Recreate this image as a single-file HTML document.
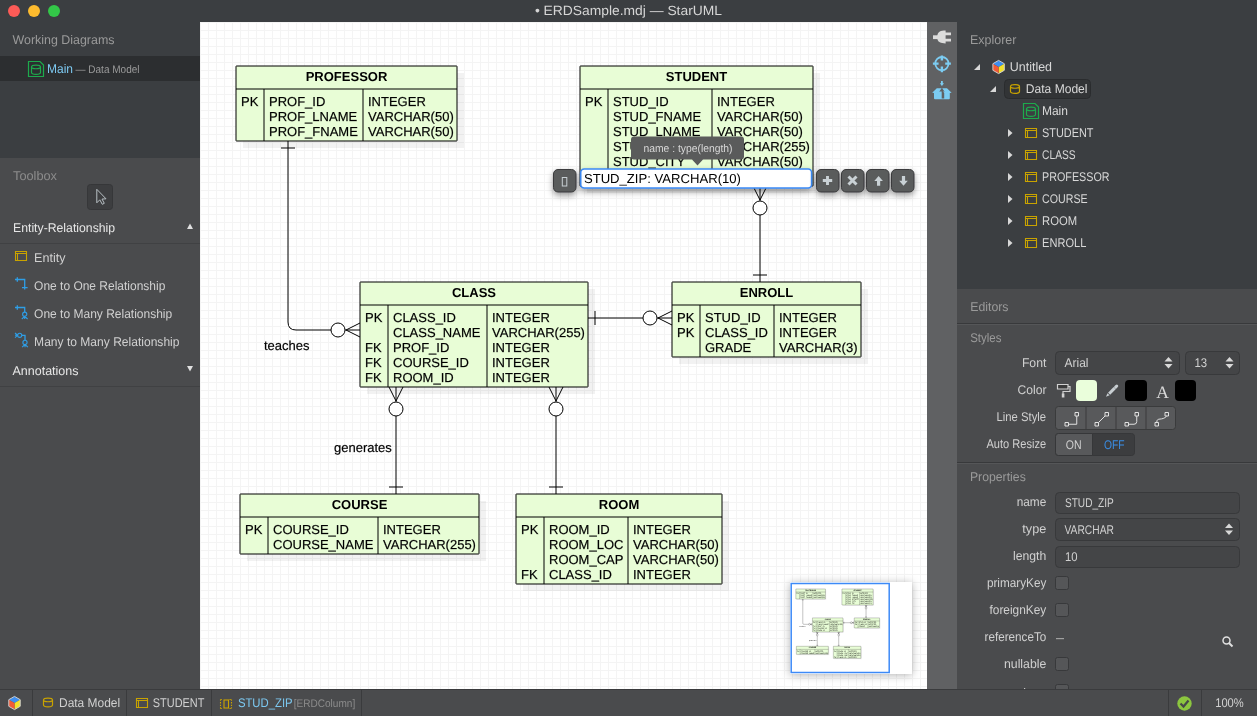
<!DOCTYPE html>
<html><head><meta charset="utf-8"><title>StarUML</title>
<style>
html,body{margin:0;padding:0;width:1257px;height:716px;overflow:hidden;background:#3b3e41;}
svg{display:block;font-family:"Liberation Sans", sans-serif;text-rendering:geometricPrecision;will-change:transform;}
</style></head><body>
<svg width="1257" height="716" viewBox="0 0 1257 716">
<defs>
<pattern id="grid" x="200" y="22" width="8" height="8" patternUnits="userSpaceOnUse">
<rect width="8" height="8" fill="#fff"/><rect width="8" height="1" fill="#f4f4f4"/><rect width="1" height="8" fill="#f4f4f4"/>
</pattern>
<clipPath id="canvasclip"><rect x="200" y="22" width="727" height="667"/></clipPath>
<clipPath id="miniclip"><rect x="790" y="582" width="122" height="92"/></clipPath>
<filter id="shadow" x="-50%" y="-50%" width="200%" height="200%"><feDropShadow dx="0" dy="3" stdDeviation="3" flood-color="#000" flood-opacity="0.4"/></filter>
<filter id="shadow2" x="-30%" y="-30%" width="160%" height="160%"><feDropShadow dx="0" dy="1" stdDeviation="4" flood-color="#000" flood-opacity="0.3"/></filter>
<g id="diagram">
<path d="M288 141 V322 Q288 330 296 330 H331" stroke="#000" stroke-width="1" fill="none"/>
<path d="M281 148 H295" stroke="#000" stroke-width="1" fill="none"/>
<circle cx="338" cy="330" r="7" fill="#fff" stroke="#000" stroke-width="1"/>
<path d="M345 330 H360 M346 330 L360 323 M346 330 L360 337" stroke="#000" stroke-width="1" fill="none"/>
<path d="M760 186 V201 M760 215 V282" stroke="#000" stroke-width="1" fill="none"/>
<path d="M760 200 L753 186 M760 200 L767 186" stroke="#000" stroke-width="1" fill="none"/>
<circle cx="760" cy="208" r="7" fill="#fff" stroke="#000" stroke-width="1"/>
<path d="M753 275 H767" stroke="#000" stroke-width="1" fill="none"/>
<path d="M588 318 H643 M657 318 H672" stroke="#000" stroke-width="1" fill="none"/>
<path d="M595 311 V325" stroke="#000" stroke-width="1" fill="none"/>
<circle cx="650" cy="318" r="7" fill="#fff" stroke="#000" stroke-width="1"/>
<path d="M658 318 L672 311 M658 318 L672 325" stroke="#000" stroke-width="1" fill="none"/>
<path d="M396 387 V402 M396 416 V494" stroke="#000" stroke-width="1" fill="none"/>
<path d="M396 401 L389 387 M396 401 L403 387" stroke="#000" stroke-width="1" fill="none"/>
<circle cx="396" cy="409" r="7" fill="#fff" stroke="#000" stroke-width="1"/>
<path d="M389 487 H403" stroke="#000" stroke-width="1" fill="none"/>
<path d="M556 387 V402 M556 416 V494" stroke="#000" stroke-width="1" fill="none"/>
<path d="M556 401 L549 387 M556 401 L563 387" stroke="#000" stroke-width="1" fill="none"/>
<circle cx="556" cy="409" r="7" fill="#fff" stroke="#000" stroke-width="1"/>
<path d="M549 487 H563" stroke="#000" stroke-width="1" fill="none"/>
<text x="264" y="350" font-size="13" fill="#000" stroke="#000" stroke-width="0.3" stroke-opacity="0.6">teaches</text>
<text x="334" y="452" font-size="13" fill="#000" stroke="#000" stroke-width="0.3" stroke-opacity="0.6">generates</text>
<rect x="243" y="73" width="221" height="75" fill="#000" fill-opacity="0.05"/>
<rect x="236" y="66" width="221" height="75" fill="#e8fdd6" stroke="#000" stroke-width="1" rx="0.4"/>
<path d="M236 89 H457 M264 89 V141 M363 89 V141" stroke="#000" stroke-width="1" fill="none"/>
<text x="346.5" y="81" font-size="13" font-weight="bold" text-anchor="middle" fill="#000">PROFESSOR</text>
<text x="241" y="106" font-size="13" fill="#000" stroke="#000" stroke-width="0.3" stroke-opacity="0.6">PK</text>
<text x="269" y="106" font-size="13" fill="#000" stroke="#000" stroke-width="0.3" stroke-opacity="0.6">PROF_ID</text>
<text x="368" y="106" font-size="13" fill="#000" stroke="#000" stroke-width="0.3" stroke-opacity="0.6">INTEGER</text>
<text x="269" y="121" font-size="13" fill="#000" stroke="#000" stroke-width="0.3" stroke-opacity="0.6">PROF_LNAME</text>
<text x="368" y="121" font-size="13" fill="#000" stroke="#000" stroke-width="0.3" stroke-opacity="0.6">VARCHAR(50)</text>
<text x="269" y="136" font-size="13" fill="#000" stroke="#000" stroke-width="0.3" stroke-opacity="0.6">PROF_FNAME</text>
<text x="368" y="136" font-size="13" fill="#000" stroke="#000" stroke-width="0.3" stroke-opacity="0.6">VARCHAR(50)</text>
<rect x="587" y="73" width="233" height="120" fill="#000" fill-opacity="0.05"/>
<rect x="580" y="66" width="233" height="120" fill="#e8fdd6" stroke="#000" stroke-width="1" rx="0.4"/>
<path d="M580 89 H813 M608 89 V186 M712 89 V186" stroke="#000" stroke-width="1" fill="none"/>
<text x="696.5" y="81" font-size="13" font-weight="bold" text-anchor="middle" fill="#000">STUDENT</text>
<text x="585" y="106" font-size="13" fill="#000" stroke="#000" stroke-width="0.3" stroke-opacity="0.6">PK</text>
<text x="613" y="106" font-size="13" fill="#000" stroke="#000" stroke-width="0.3" stroke-opacity="0.6">STUD_ID</text>
<text x="717" y="106" font-size="13" fill="#000" stroke="#000" stroke-width="0.3" stroke-opacity="0.6">INTEGER</text>
<text x="613" y="121" font-size="13" fill="#000" stroke="#000" stroke-width="0.3" stroke-opacity="0.6">STUD_FNAME</text>
<text x="717" y="121" font-size="13" fill="#000" stroke="#000" stroke-width="0.3" stroke-opacity="0.6">VARCHAR(50)</text>
<text x="613" y="136" font-size="13" fill="#000" stroke="#000" stroke-width="0.3" stroke-opacity="0.6">STUD_LNAME</text>
<text x="717" y="136" font-size="13" fill="#000" stroke="#000" stroke-width="0.3" stroke-opacity="0.6">VARCHAR(50)</text>
<text x="613" y="151" font-size="13" fill="#000" stroke="#000" stroke-width="0.3" stroke-opacity="0.6">STUD_STREET</text>
<text x="717" y="151" font-size="13" fill="#000" stroke="#000" stroke-width="0.3" stroke-opacity="0.6">VARCHAR(255)</text>
<text x="613" y="166" font-size="13" fill="#000" stroke="#000" stroke-width="0.3" stroke-opacity="0.6">STUD_CITY</text>
<text x="717" y="166" font-size="13" fill="#000" stroke="#000" stroke-width="0.3" stroke-opacity="0.6">VARCHAR(50)</text>
<text x="613" y="181" font-size="13" fill="#000" stroke="#000" stroke-width="0.3" stroke-opacity="0.6">STUD_ZIP</text>
<text x="717" y="181" font-size="13" fill="#000" stroke="#000" stroke-width="0.3" stroke-opacity="0.6">VARCHAR(10)</text>
<rect x="367" y="289" width="228" height="105" fill="#000" fill-opacity="0.05"/>
<rect x="360" y="282" width="228" height="105" fill="#e8fdd6" stroke="#000" stroke-width="1" rx="0.4"/>
<path d="M360 305 H588 M388 305 V387 M487 305 V387" stroke="#000" stroke-width="1" fill="none"/>
<text x="474.0" y="297" font-size="13" font-weight="bold" text-anchor="middle" fill="#000">CLASS</text>
<text x="365" y="322" font-size="13" fill="#000" stroke="#000" stroke-width="0.3" stroke-opacity="0.6">PK</text>
<text x="393" y="322" font-size="13" fill="#000" stroke="#000" stroke-width="0.3" stroke-opacity="0.6">CLASS_ID</text>
<text x="492" y="322" font-size="13" fill="#000" stroke="#000" stroke-width="0.3" stroke-opacity="0.6">INTEGER</text>
<text x="393" y="337" font-size="13" fill="#000" stroke="#000" stroke-width="0.3" stroke-opacity="0.6">CLASS_NAME</text>
<text x="492" y="337" font-size="13" fill="#000" stroke="#000" stroke-width="0.3" stroke-opacity="0.6">VARCHAR(255)</text>
<text x="365" y="352" font-size="13" fill="#000" stroke="#000" stroke-width="0.3" stroke-opacity="0.6">FK</text>
<text x="393" y="352" font-size="13" fill="#000" stroke="#000" stroke-width="0.3" stroke-opacity="0.6">PROF_ID</text>
<text x="492" y="352" font-size="13" fill="#000" stroke="#000" stroke-width="0.3" stroke-opacity="0.6">INTEGER</text>
<text x="365" y="367" font-size="13" fill="#000" stroke="#000" stroke-width="0.3" stroke-opacity="0.6">FK</text>
<text x="393" y="367" font-size="13" fill="#000" stroke="#000" stroke-width="0.3" stroke-opacity="0.6">COURSE_ID</text>
<text x="492" y="367" font-size="13" fill="#000" stroke="#000" stroke-width="0.3" stroke-opacity="0.6">INTEGER</text>
<text x="365" y="382" font-size="13" fill="#000" stroke="#000" stroke-width="0.3" stroke-opacity="0.6">FK</text>
<text x="393" y="382" font-size="13" fill="#000" stroke="#000" stroke-width="0.3" stroke-opacity="0.6">ROOM_ID</text>
<text x="492" y="382" font-size="13" fill="#000" stroke="#000" stroke-width="0.3" stroke-opacity="0.6">INTEGER</text>
<rect x="679" y="289" width="189" height="75" fill="#000" fill-opacity="0.05"/>
<rect x="672" y="282" width="189" height="75" fill="#e8fdd6" stroke="#000" stroke-width="1" rx="0.4"/>
<path d="M672 305 H861 M700 305 V357 M774 305 V357" stroke="#000" stroke-width="1" fill="none"/>
<text x="766.5" y="297" font-size="13" font-weight="bold" text-anchor="middle" fill="#000">ENROLL</text>
<text x="677" y="322" font-size="13" fill="#000" stroke="#000" stroke-width="0.3" stroke-opacity="0.6">PK</text>
<text x="705" y="322" font-size="13" fill="#000" stroke="#000" stroke-width="0.3" stroke-opacity="0.6">STUD_ID</text>
<text x="779" y="322" font-size="13" fill="#000" stroke="#000" stroke-width="0.3" stroke-opacity="0.6">INTEGER</text>
<text x="677" y="337" font-size="13" fill="#000" stroke="#000" stroke-width="0.3" stroke-opacity="0.6">PK</text>
<text x="705" y="337" font-size="13" fill="#000" stroke="#000" stroke-width="0.3" stroke-opacity="0.6">CLASS_ID</text>
<text x="779" y="337" font-size="13" fill="#000" stroke="#000" stroke-width="0.3" stroke-opacity="0.6">INTEGER</text>
<text x="705" y="352" font-size="13" fill="#000" stroke="#000" stroke-width="0.3" stroke-opacity="0.6">GRADE</text>
<text x="779" y="352" font-size="13" fill="#000" stroke="#000" stroke-width="0.3" stroke-opacity="0.6">VARCHAR(3)</text>
<rect x="247" y="501" width="239" height="60" fill="#000" fill-opacity="0.05"/>
<rect x="240" y="494" width="239" height="60" fill="#e8fdd6" stroke="#000" stroke-width="1" rx="0.4"/>
<path d="M240 517 H479 M268 517 V554 M378 517 V554" stroke="#000" stroke-width="1" fill="none"/>
<text x="359.5" y="509" font-size="13" font-weight="bold" text-anchor="middle" fill="#000">COURSE</text>
<text x="245" y="534" font-size="13" fill="#000" stroke="#000" stroke-width="0.3" stroke-opacity="0.6">PK</text>
<text x="273" y="534" font-size="13" fill="#000" stroke="#000" stroke-width="0.3" stroke-opacity="0.6">COURSE_ID</text>
<text x="383" y="534" font-size="13" fill="#000" stroke="#000" stroke-width="0.3" stroke-opacity="0.6">INTEGER</text>
<text x="273" y="549" font-size="13" fill="#000" stroke="#000" stroke-width="0.3" stroke-opacity="0.6">COURSE_NAME</text>
<text x="383" y="549" font-size="13" fill="#000" stroke="#000" stroke-width="0.3" stroke-opacity="0.6">VARCHAR(255)</text>
<rect x="523" y="501" width="206" height="90" fill="#000" fill-opacity="0.05"/>
<rect x="516" y="494" width="206" height="90" fill="#e8fdd6" stroke="#000" stroke-width="1" rx="0.4"/>
<path d="M516 517 H722 M544 517 V584 M628 517 V584" stroke="#000" stroke-width="1" fill="none"/>
<text x="619.0" y="509" font-size="13" font-weight="bold" text-anchor="middle" fill="#000">ROOM</text>
<text x="521" y="534" font-size="13" fill="#000" stroke="#000" stroke-width="0.3" stroke-opacity="0.6">PK</text>
<text x="549" y="534" font-size="13" fill="#000" stroke="#000" stroke-width="0.3" stroke-opacity="0.6">ROOM_ID</text>
<text x="633" y="534" font-size="13" fill="#000" stroke="#000" stroke-width="0.3" stroke-opacity="0.6">INTEGER</text>
<text x="549" y="549" font-size="13" fill="#000" stroke="#000" stroke-width="0.3" stroke-opacity="0.6">ROOM_LOC</text>
<text x="633" y="549" font-size="13" fill="#000" stroke="#000" stroke-width="0.3" stroke-opacity="0.6">VARCHAR(50)</text>
<text x="549" y="564" font-size="13" fill="#000" stroke="#000" stroke-width="0.3" stroke-opacity="0.6">ROOM_CAP</text>
<text x="633" y="564" font-size="13" fill="#000" stroke="#000" stroke-width="0.3" stroke-opacity="0.6">VARCHAR(50)</text>
<text x="521" y="579" font-size="13" fill="#000" stroke="#000" stroke-width="0.3" stroke-opacity="0.6">FK</text>
<text x="549" y="579" font-size="13" fill="#000" stroke="#000" stroke-width="0.3" stroke-opacity="0.6">CLASS_ID</text>
<text x="633" y="579" font-size="13" fill="#000" stroke="#000" stroke-width="0.3" stroke-opacity="0.6">INTEGER</text>
</g>
</defs>

<rect x="0" y="0" width="1257" height="22" fill="#3b3e41"/>
<rect x="0" y="22" width="200" height="136" fill="#3b3e41"/>
<rect x="0" y="56" width="200" height="25" fill="#2c2e30"/>
<rect x="0" y="158" width="200" height="531" fill="#4a4b4d"/>
<rect x="957" y="22" width="300" height="267" fill="#3b3e41"/>
<rect x="957" y="289" width="300" height="400" fill="#4a4b4d"/>
<rect x="927" y="22" width="30" height="667" fill="#606163"/>
<rect x="0" y="689" width="1257" height="27" fill="#4a4b4d"/>
<g clip-path="url(#canvasclip)">
<rect x="200" y="22" width="727" height="667" fill="url(#grid)"/>
<use href="#diagram"/>
</g>
<circle cx="14" cy="11" r="6" fill="#fc5b57"/>
<circle cx="34" cy="11" r="6" fill="#fdbb2e"/>
<circle cx="54" cy="11" r="6" fill="#33c748"/>
<text x="534.90" y="15" font-size="13.3" fill="#d6d6d6" textLength="187.10" lengthAdjust="spacingAndGlyphs">• ERDSample.mdj — StarUML</text>
<text x="12.50" y="44" font-size="12.6" fill="#9a9a9a" textLength="102.00" lengthAdjust="spacingAndGlyphs">Working Diagrams</text>
<text x="47.00" y="73" font-size="12.6" fill="#7cc8f0" textLength="26.00" lengthAdjust="spacingAndGlyphs">Main</text>
<text x="75.50" y="73" font-size="11" fill="#9a9a9a" textLength="64.00" lengthAdjust="spacingAndGlyphs">— Data Model</text>
<text x="13.00" y="180" font-size="12.6" fill="#8c8c8c" textLength="44.00" lengthAdjust="spacingAndGlyphs">Toolbox</text>
<text x="13.00" y="232" font-size="12.6" fill="#e6e6e6" textLength="102.10" lengthAdjust="spacingAndGlyphs">Entity-Relationship</text>
<text x="34.10" y="262" font-size="12.6" fill="#d0d0d0" textLength="31.40" lengthAdjust="spacingAndGlyphs">Entity</text>
<text x="34.10" y="290" font-size="12.6" fill="#d0d0d0" textLength="131.20" lengthAdjust="spacingAndGlyphs">One to One Relationship</text>
<text x="34.10" y="318" font-size="12.6" fill="#d0d0d0" textLength="138.10" lengthAdjust="spacingAndGlyphs">One to Many Relationship</text>
<text x="34.10" y="346" font-size="12.6" fill="#d0d0d0" textLength="145.40" lengthAdjust="spacingAndGlyphs">Many to Many Relationship</text>
<text x="12.50" y="375" font-size="12.6" fill="#e6e6e6" textLength="66.00" lengthAdjust="spacingAndGlyphs">Annotations</text>
<text x="970.00" y="44" font-size="12.6" fill="#9a9a9a" textLength="46.40" lengthAdjust="spacingAndGlyphs">Explorer</text>
<text x="1009.80" y="71" font-size="12.6" fill="#d8d8d8" textLength="42.20" lengthAdjust="spacingAndGlyphs">Untitled</text>
<text x="1025.80" y="93" font-size="12.6" fill="#d8d8d8" textLength="61.70" lengthAdjust="spacingAndGlyphs">Data Model</text>
<text x="1041.90" y="115" font-size="12.6" fill="#d8d8d8" textLength="26.10" lengthAdjust="spacingAndGlyphs">Main</text>
<text x="1042.10" y="137" font-size="12.6" fill="#d8d8d8" textLength="51.40" lengthAdjust="spacingAndGlyphs">STUDENT</text>
<text x="1042.10" y="159" font-size="12.6" fill="#d8d8d8" textLength="33.60" lengthAdjust="spacingAndGlyphs">CLASS</text>
<text x="1042.10" y="181" font-size="12.6" fill="#d8d8d8" textLength="67.40" lengthAdjust="spacingAndGlyphs">PROFESSOR</text>
<text x="1042.10" y="203" font-size="12.6" fill="#d8d8d8" textLength="45.60" lengthAdjust="spacingAndGlyphs">COURSE</text>
<text x="1042.10" y="225" font-size="12.6" fill="#d8d8d8" textLength="35.10" lengthAdjust="spacingAndGlyphs">ROOM</text>
<text x="1042.10" y="247" font-size="12.6" fill="#d8d8d8" textLength="44.20" lengthAdjust="spacingAndGlyphs">ENROLL</text>
<text x="970.20" y="311" font-size="12.6" fill="#9a9a9a" textLength="38.30" lengthAdjust="spacingAndGlyphs">Editors</text>
<text x="970.20" y="342" font-size="12.6" fill="#9a9a9a" textLength="31.30" lengthAdjust="spacingAndGlyphs">Styles</text>
<text x="1021.90" y="367" font-size="12.6" fill="#d0d0d0" textLength="24.50" lengthAdjust="spacingAndGlyphs">Font</text>
<text x="1017.50" y="394" font-size="12.6" fill="#d0d0d0" textLength="29.00" lengthAdjust="spacingAndGlyphs">Color</text>
<text x="996.50" y="421" font-size="12.6" fill="#d0d0d0" textLength="49.60" lengthAdjust="spacingAndGlyphs">Line Style</text>
<text x="986.50" y="448" font-size="12.6" fill="#d0d0d0" textLength="59.60" lengthAdjust="spacingAndGlyphs">Auto Resize</text>
<text x="969.90" y="481" font-size="12.6" fill="#9a9a9a" textLength="55.90" lengthAdjust="spacingAndGlyphs">Properties</text>
<text x="1016.70" y="506" font-size="12.6" fill="#d0d0d0" textLength="29.60" lengthAdjust="spacingAndGlyphs">name</text>
<text x="1022.30" y="533" font-size="12.6" fill="#d0d0d0" textLength="24.00" lengthAdjust="spacingAndGlyphs">type</text>
<text x="1013.00" y="560" font-size="12.6" fill="#d0d0d0" textLength="33.30" lengthAdjust="spacingAndGlyphs">length</text>
<text x="986.90" y="587" font-size="12.6" fill="#d0d0d0" textLength="59.40" lengthAdjust="spacingAndGlyphs">primaryKey</text>
<text x="989.50" y="614" font-size="12.6" fill="#d0d0d0" textLength="56.80" lengthAdjust="spacingAndGlyphs">foreignKey</text>
<text x="984.60" y="641" font-size="12.6" fill="#d0d0d0" textLength="61.70" lengthAdjust="spacingAndGlyphs">referenceTo</text>
<text x="1004.00" y="668" font-size="12.6" fill="#d0d0d0" textLength="42.30" lengthAdjust="spacingAndGlyphs">nullable</text>
<text x="1009.50" y="696.5" font-size="12.6" fill="#d0d0d0" textLength="36.80" lengthAdjust="spacingAndGlyphs">unique</text>
<path d="M28.5 61.5 H40 L43.5 65 V76.5 H28.5 Z" stroke="#1daa4c" fill="none" stroke-width="1.2"/>
<path d="M31.5 67 C31.5 64.5 40.5 64.5 40.5 67 V72.5 C40.5 75 31.5 75 31.5 72.5 Z M31.5 67 C31.5 69.3 40.5 69.3 40.5 67" stroke="#1daa4c" fill="none" stroke-width="1.2"/>
<rect x="87.5" y="184.5" width="25" height="25" rx="3" fill="#3d3e40" stroke="#363739"/>
<path d="M96.8 189.3 L96.8 202.8 L99.8 199.8 L102.3 204.3 L104.3 203.3 L102 199.1 L106 198.8 Z" stroke="#b8c0c4" fill="#3d3e40" stroke-width="1"/>
<path d="M187 229 L190 223.5 L193 229 Z" stroke="none" fill="#e0e0e0" stroke-width="1"/>
<rect x="0" y="243" width="200" height="1" fill="#404143"/>
<path d="M15.5 251.5 H26.5 V260.5 H15.5 Z M15.5 253.5 H26.5 M17.5 253.5 V260.5" stroke="#c9a300" fill="none" stroke-width="1.1"/>
<path d="M15 279.5 H24.7 V289.5 M17.3 277.2 V281.8 M22 287.6 H27.6" stroke="#2f9ee6" fill="none" stroke-width="1.3"/>
<path d="M15 307.5 H24.7 V312.1 M17.3 305.2 V309.8" stroke="#2f9ee6" fill="none" stroke-width="1.3"/>
<path d="M24.7 314.2 m-2.1 0 a2.1 2.1 0 1 0 4.2 0 a2.1 2.1 0 1 0 -4.2 0 M24.7 316.3 L21.8 319 M24.7 316.3 V319 M24.7 316.3 L27.6 319" stroke="#2f9ee6" fill="none" stroke-width="1.1"/>
<path d="M15 333 L17.6 335.3 L15 337.6 M15 335.3 H17.6" stroke="#2f9ee6" fill="none" stroke-width="1.1"/>
<path d="M19.7 335.3 m-2.1 0 a2.1 2.1 0 1 0 4.2 0 a2.1 2.1 0 1 0 -4.2 0" stroke="#2f9ee6" fill="none" stroke-width="1.1"/>
<path d="M21.8 335.3 H25 V340.3" stroke="#2f9ee6" fill="none" stroke-width="1.3"/>
<path d="M25 342.4 m-2.1 0 a2.1 2.1 0 1 0 4.2 0 a2.1 2.1 0 1 0 -4.2 0 M25 344.5 L22.1 347.2 M25 344.5 V347.2 M25 344.5 L27.9 347.2" stroke="#2f9ee6" fill="none" stroke-width="1.1"/>
<path d="M187 366 L193 366 L190 371.5 Z" stroke="none" fill="#e0e0e0" stroke-width="1"/>
<rect x="0" y="386" width="200" height="1" fill="#404143"/>
<path d="M933 35.3 H938 V39.1 H933 Z" stroke="none" fill="#dcdcdc" stroke-width="1"/>
<path d="M937.4 35.3 C938 31.5 940.5 30.4 945.6 30.4 V43.4 C940.5 43.4 938 42.3 937.4 39.1 Z" stroke="none" fill="#dcdcdc" stroke-width="1"/>
<path d="M945 32.5 H951 V35.3 H945 Z M945 38.7 H951 V41.4 H945 Z" stroke="none" fill="#dcdcdc" stroke-width="1"/>
<circle cx="941.9" cy="63.6" r="6.6" fill="none" stroke="#7cccf2" stroke-width="1.8"/>
<path d="M941.9 55.4 V60.6 M941.9 66.6 V72.2 M932.9 63.6 H938.6 M945.2 63.6 H950.9" stroke="#7cccf2" fill="none" stroke-width="2.4"/>
<path d="M941.9 81 V84" stroke="#7cccf2" fill="none" stroke-width="1.8"/>
<path d="M939.8 83.2 H944 L941.9 86 Z" stroke="none" fill="#7cccf2" stroke-width="1"/>
<path d="M934 91.5 H949.8 V98.2 Q949.8 99.2 948.8 99.2 H935 Q934 99.2 934 98.2 Z" stroke="none" fill="#7cccf2" stroke-width="1"/>
<path d="M932.2 92.8 L936.8 88.2 H941.6 L938 93.6 Z M951.6 92.8 L947 88.2 H942.2 L945.8 93.6 Z" stroke="none" fill="#7cccf2" stroke-width="1"/>
<path d="M941.7 89.5 L944.2 93 V98.6 H941.7 Z" stroke="none" fill="#606163" stroke-width="1"/>
<path d="M974 70 L980 70 L980 64 Z" stroke="none" fill="#d8d8d8" stroke-width="1"/>
<path d="M998.60 60.40 L1004.32 63.70 L998.6 67 L992.88 63.70 Z" stroke="none" fill="#3d8ef0" stroke-width="1"/>
<path d="M1004.32 63.70 L1004.32 70.30 L998.60 73.60 L998.6 67 Z" stroke="none" fill="#f2e12c" stroke-width="1"/>
<path d="M992.88 63.70 L998.6 67 L998.60 73.60 L992.88 70.30 Z" stroke="none" fill="#f25a36" stroke-width="1"/>
<path d="M998.60 60.40 L1004.32 63.70 L1004.32 70.30 L998.60 73.60 L992.88 70.30 L992.88 63.70 Z" stroke="#d8d8d8" fill="none" stroke-width="0.9"/>
<rect x="1004.5" y="79.5" width="86" height="19" rx="4" fill="#323436" stroke="#2a2c2e"/>
<path d="M990 92 L996 92 L996 86 Z" stroke="none" fill="#d8d8d8" stroke-width="1"/>
<path d="M1010.5 86.5 C1010.5 84 1019.5 84 1019.5 86.5 V91.5 C1019.5 94 1010.5 94 1010.5 91.5 Z M1010.5 86.5 C1010.5 88.8 1019.5 88.8 1019.5 86.5" stroke="#c9a300" fill="none" stroke-width="1.2"/>
<text x="1025.80" y="93" font-size="12.6" fill="#d8d8d8" textLength="61.70" lengthAdjust="spacingAndGlyphs">Data Model</text>
<path d="M1023.5 103.5 H1035 L1038.5 107 V118.5 H1023.5 Z" stroke="#1daa4c" fill="none" stroke-width="1.2"/>
<path d="M1026.5 109 C1026.5 106.5 1035.5 106.5 1035.5 109 V114.5 C1035.5 117 1026.5 117 1026.5 114.5 Z M1026.5 109 C1026.5 111.3 1035.5 111.3 1035.5 109" stroke="#1daa4c" fill="none" stroke-width="1.2"/>
<path d="M1008 129 L1012.5 133 L1008 137 Z" stroke="none" fill="#d8d8d8" stroke-width="1"/>
<path d="M1025.5 128.5 H1036.5 V137.5 H1025.5 Z M1025.5 130.5 H1036.5 M1027.5 130.5 V137.5" stroke="#c9a300" fill="none" stroke-width="1.1"/>
<path d="M1008 151 L1012.5 155 L1008 159 Z" stroke="none" fill="#d8d8d8" stroke-width="1"/>
<path d="M1025.5 150.5 H1036.5 V159.5 H1025.5 Z M1025.5 152.5 H1036.5 M1027.5 152.5 V159.5" stroke="#c9a300" fill="none" stroke-width="1.1"/>
<path d="M1008 173 L1012.5 177 L1008 181 Z" stroke="none" fill="#d8d8d8" stroke-width="1"/>
<path d="M1025.5 172.5 H1036.5 V181.5 H1025.5 Z M1025.5 174.5 H1036.5 M1027.5 174.5 V181.5" stroke="#c9a300" fill="none" stroke-width="1.1"/>
<path d="M1008 195 L1012.5 199 L1008 203 Z" stroke="none" fill="#d8d8d8" stroke-width="1"/>
<path d="M1025.5 194.5 H1036.5 V203.5 H1025.5 Z M1025.5 196.5 H1036.5 M1027.5 196.5 V203.5" stroke="#c9a300" fill="none" stroke-width="1.1"/>
<path d="M1008 217 L1012.5 221 L1008 225 Z" stroke="none" fill="#d8d8d8" stroke-width="1"/>
<path d="M1025.5 216.5 H1036.5 V225.5 H1025.5 Z M1025.5 218.5 H1036.5 M1027.5 218.5 V225.5" stroke="#c9a300" fill="none" stroke-width="1.1"/>
<path d="M1008 239 L1012.5 243 L1008 247 Z" stroke="none" fill="#d8d8d8" stroke-width="1"/>
<path d="M1025.5 238.5 H1036.5 V247.5 H1025.5 Z M1025.5 240.5 H1036.5 M1027.5 240.5 V247.5" stroke="#c9a300" fill="none" stroke-width="1.1"/>
<rect x="957" y="323" width="300" height="1" fill="#38393b"/>
<rect x="957" y="324" width="300" height="1" fill="#555658"/>
<rect x="957" y="462" width="300" height="1" fill="#38393b"/>
<rect x="957" y="463" width="300" height="1" fill="#555658"/>
<rect x="1055.5" y="351.5" width="124" height="23" rx="4" fill="#444547" stroke="#38393b"/>
<rect x="1185.5" y="351.5" width="54" height="23" rx="4" fill="#444547" stroke="#38393b"/>
<text x="1064.50" y="367" font-size="12.6" fill="#d0d0d0" textLength="24.00" lengthAdjust="spacingAndGlyphs">Arial</text>
<text x="1194.50" y="367" font-size="12.6" fill="#d0d0d0" textLength="12.70" lengthAdjust="spacingAndGlyphs">13</text>
<path d="M1164.5 361.5 L1168.5 357 L1172.5 361.5 Z M1164.5 364 L1168.5 368.5 L1172.5 364 Z" stroke="none" fill="#d8d8d8" stroke-width="1"/>
<path d="M1225.5 361.5 L1229.5 357 L1233.5 361.5 Z M1225.5 364 L1229.5 368.5 L1233.5 364 Z" stroke="none" fill="#d8d8d8" stroke-width="1"/>
<path d="M1057.5 384.5 H1068 V389 H1057.5 Z" stroke="#d0d0d0" fill="#3a3a3a" stroke-width="1.2"/>
<path d="M1068 386.5 H1070 V391.5 H1063 V394" stroke="#d0d0d0" fill="none" stroke-width="1.2"/>
<rect x="1061.8" y="393.5" width="2.6" height="4" rx="0" fill="#d0d0d0"/>
<rect x="1076" y="380" width="21" height="21" rx="4" fill="#eafedb"/>
<path d="M1106.00 396.80 L1109.61 395.32 L1107.48 393.19 Z" stroke="none" fill="#c8ced2" stroke-width="1"/>
<path d="M1109.11 393.69 L1114.63 388.17" stroke="#c8ced2" fill="none" stroke-width="3"/>
<path d="M1115.62 387.18 L1116.75 386.05" stroke="#c8ced2" fill="none" stroke-width="3" stroke-linecap="round"/>
<rect x="1125" y="380" width="22" height="21" rx="4" fill="#000"/>
<text x="1162.5" y="398" font-family="Liberation Serif" font-size="17.5" fill="#d8d8d8" text-anchor="middle">A</text>
<rect x="1175" y="380" width="21" height="21" rx="4" fill="#000"/>
<rect x="1055.5" y="406.5" width="120" height="23" rx="3" fill="#58595b" stroke="#3a3b3c"/>
<rect x="1085.5" y="407" width="1" height="22" fill="#3a3b3c"/>
<rect x="1115.5" y="407" width="1" height="22" fill="#3a3b3c"/>
<rect x="1145.5" y="407" width="1" height="22" fill="#3a3b3c"/>
<path d="M1065.0 422.5 h3.5 v3.5 h-3.5 Z" stroke="#e0e0e0" fill="none" stroke-width="1"/>
<path d="M1075.0 412.5 h3.5 v3.5 h-3.5 Z" stroke="#e0e0e0" fill="none" stroke-width="1"/>
<path d="M1068.5 424.25 H1076.75 V416.0" stroke="#e0e0e0" fill="none" stroke-width="1"/>
<path d="M1095.0 422.5 h3.5 v3.5 h-3.5 Z" stroke="#e0e0e0" fill="none" stroke-width="1"/>
<path d="M1105.0 412.5 h3.5 v3.5 h-3.5 Z" stroke="#e0e0e0" fill="none" stroke-width="1"/>
<path d="M1098.5 422.5 L1105.0 416.0" stroke="#e0e0e0" fill="none" stroke-width="1"/>
<path d="M1125.0 422.5 h3.5 v3.5 h-3.5 Z" stroke="#e0e0e0" fill="none" stroke-width="1"/>
<path d="M1135.0 412.5 h3.5 v3.5 h-3.5 Z" stroke="#e0e0e0" fill="none" stroke-width="1"/>
<path d="M1128.5 424.25 H1134.0 Q1136.75 424.25 1136.75 421.5 V416.0" stroke="#e0e0e0" fill="none" stroke-width="1"/>
<path d="M1155.0 422.5 h3.5 v3.5 h-3.5 Z" stroke="#e0e0e0" fill="none" stroke-width="1"/>
<path d="M1165.0 412.5 h3.5 v3.5 h-3.5 Z" stroke="#e0e0e0" fill="none" stroke-width="1"/>
<path d="M1156.75 422.5 C1156.75 416.5 1162.0 421.5 1166.75 416.0" stroke="#e0e0e0" fill="none" stroke-width="1"/>
<rect x="1055.5" y="433.5" width="79" height="22" rx="3" fill="#3c3d3f" stroke="#363739"/>
<path d="M1058.5 433.5 H1092.5 V455.5 H1058.5 Q1055.5 455.5 1055.5 452.5 V436.5 Q1055.5 433.5 1058.5 433.5 Z" fill="#58595b" stroke="#363739"/>
<text x="1065.80" y="449" font-size="12.6" fill="#d0d0d0" textLength="15.80" lengthAdjust="spacingAndGlyphs">ON</text>
<text x="1103.90" y="449" font-size="12.6" fill="#3a8ee6" textLength="20.60" lengthAdjust="spacingAndGlyphs">OFF</text>
<rect x="1055.5" y="492.5" width="184" height="21" rx="4" fill="#444547" stroke="#38393b"/>
<rect x="1055.5" y="518.5" width="184" height="22" rx="4" fill="#444547" stroke="#38393b"/>
<rect x="1055.5" y="546.5" width="184" height="21" rx="4" fill="#444547" stroke="#38393b"/>
<text x="1064.90" y="507" font-size="12.6" fill="#d0d0d0" textLength="49.00" lengthAdjust="spacingAndGlyphs">STUD_ZIP</text>
<text x="1064.50" y="534" font-size="12.6" fill="#d0d0d0" textLength="49.40" lengthAdjust="spacingAndGlyphs">VARCHAR</text>
<text x="1064.90" y="561" font-size="12.6" fill="#d0d0d0" textLength="12.60" lengthAdjust="spacingAndGlyphs">10</text>
<path d="M1225 528 L1229 523.5 L1233 528 Z M1225 530.5 L1229 535 L1233 530.5 Z" stroke="none" fill="#d8d8d8" stroke-width="1"/>
<rect x="1055.5" y="576.5" width="13" height="13" rx="2" fill="#555658" stroke="#38393b"/>
<rect x="1055.5" y="603.5" width="13" height="13" rx="2" fill="#555658" stroke="#38393b"/>
<rect x="1055.5" y="657.5" width="13" height="13" rx="2" fill="#555658" stroke="#38393b"/>
<rect x="1055.5" y="684.5" width="13" height="13" rx="2" fill="#555658" stroke="#38393b"/>
<rect x="1056" y="638" width="8" height="1.2" fill="#a0a0a0"/>
<path d="M1226.5 640.5 m-3.5 0 a3.5 3.5 0 1 0 7 0 a3.5 3.5 0 1 0 -7 0" stroke="#e0e0e0" fill="none" stroke-width="1.5"/>
<path d="M1229 643 L1232.5 646.5" stroke="#e0e0e0" fill="none" stroke-width="2"/>
<rect x="0" y="689" width="1257" height="27" fill="#4a4b4d"/>
<text x="59.00" y="707" font-size="12.6" fill="#d0d0d0" textLength="61.10" lengthAdjust="spacingAndGlyphs">Data Model</text>
<text x="152.80" y="707" font-size="12.6" fill="#d0d0d0" textLength="51.60" lengthAdjust="spacingAndGlyphs">STUDENT</text>
<text x="237.90" y="707" font-size="12.5" fill="#7cc8f0" textLength="54.80" lengthAdjust="spacingAndGlyphs">STUD_ZIP</text>
<text x="293.70" y="707" font-size="11" fill="#8c8c8c" textLength="61.50" lengthAdjust="spacingAndGlyphs">[ERDColumn]</text>
<text x="1215.20" y="707" font-size="12.6" fill="#d0d0d0" textLength="28.60" lengthAdjust="spacingAndGlyphs">100%</text>
<rect x="0" y="689" width="1257" height="1" fill="#3a3b3d"/>
<rect x="32" y="690" width="1" height="26" fill="#3a3b3d"/>
<rect x="126" y="690" width="1" height="26" fill="#3a3b3d"/>
<rect x="211" y="690" width="1" height="26" fill="#3a3b3d"/>
<rect x="361" y="690" width="1" height="26" fill="#3a3b3d"/>
<rect x="1168" y="690" width="1" height="26" fill="#3a3b3d"/>
<rect x="1201" y="690" width="1" height="26" fill="#3a3b3d"/>
<path d="M14.50 696.40 L20.22 699.70 L14.5 703 L8.78 699.70 Z" stroke="none" fill="#3d8ef0" stroke-width="1"/>
<path d="M20.22 699.70 L20.22 706.30 L14.50 709.60 L14.5 703 Z" stroke="none" fill="#f2e12c" stroke-width="1"/>
<path d="M8.78 699.70 L14.5 703 L14.50 709.60 L8.78 706.30 Z" stroke="none" fill="#f25a36" stroke-width="1"/>
<path d="M14.50 696.40 L20.22 699.70 L20.22 706.30 L14.50 709.60 L8.78 706.30 L8.78 699.70 Z" stroke="#d8d8d8" fill="none" stroke-width="0.9"/>
<path d="M43.5 700.0 C43.5 697.5 52.5 697.5 52.5 700.0 V705.0 C52.5 707.5 43.5 707.5 43.5 705.0 Z M43.5 700.0 C43.5 702.3 52.5 702.3 52.5 700.0" stroke="#c9a300" fill="none" stroke-width="1.2"/>
<path d="M136.5 698.5 H147.5 V707.5 H136.5 Z M136.5 700.5 H147.5 M138.5 700.5 V707.5" stroke="#c9a300" fill="none" stroke-width="1.1"/>
<path d="M220.5 699.5 v9 M231.5 699.5 v9 M220.5 699.5 h2 M220.5 708.5 h2 M229.5 699.5 h2 M229.5 708.5 h2" stroke="#c9a300" fill="none" stroke-width="1.1" stroke-dasharray="1.3 1.3"/>
<rect x="224" y="700" width="4.5" height="8" rx="0" fill="none" stroke="#c9a300" stroke-width="1.1"/>
<circle cx="1184.5" cy="703.5" r="7.2" fill="#8cc63f"/>
<path d="M1180.5 703.5 L1183.5 706.5 L1188.5 700.5" stroke="#474849" fill="none" stroke-width="2.2"/>
<g filter="url(#shadow2)"><rect x="790" y="582" width="122" height="92" fill="#fff"/></g>
<g clip-path="url(#miniclip)"><g transform="translate(764.2 580.1) scale(0.134)"><path d="M288 141 V322 Q288 330 296 330 H331" stroke="#000" stroke-width="1.8" fill="none"/>
<path d="M281 148 H295" stroke="#000" stroke-width="1.8" fill="none"/>
<circle cx="338" cy="330" r="7" fill="#fff" stroke="#000" stroke-width="1.8"/>
<path d="M345 330 H360 M346 330 L360 323 M346 330 L360 337" stroke="#000" stroke-width="1.8" fill="none"/>
<path d="M760 186 V201 M760 215 V282" stroke="#000" stroke-width="1.8" fill="none"/>
<path d="M760 200 L753 186 M760 200 L767 186" stroke="#000" stroke-width="1.8" fill="none"/>
<circle cx="760" cy="208" r="7" fill="#fff" stroke="#000" stroke-width="1.8"/>
<path d="M753 275 H767" stroke="#000" stroke-width="1.8" fill="none"/>
<path d="M588 318 H643 M657 318 H672" stroke="#000" stroke-width="1.8" fill="none"/>
<path d="M595 311 V325" stroke="#000" stroke-width="1.8" fill="none"/>
<circle cx="650" cy="318" r="7" fill="#fff" stroke="#000" stroke-width="1.8"/>
<path d="M658 318 L672 311 M658 318 L672 325" stroke="#000" stroke-width="1.8" fill="none"/>
<path d="M396 387 V402 M396 416 V494" stroke="#000" stroke-width="1.8" fill="none"/>
<path d="M396 401 L389 387 M396 401 L403 387" stroke="#000" stroke-width="1.8" fill="none"/>
<circle cx="396" cy="409" r="7" fill="#fff" stroke="#000" stroke-width="1.8"/>
<path d="M389 487 H403" stroke="#000" stroke-width="1.8" fill="none"/>
<path d="M556 387 V402 M556 416 V494" stroke="#000" stroke-width="1.8" fill="none"/>
<path d="M556 401 L549 387 M556 401 L563 387" stroke="#000" stroke-width="1.8" fill="none"/>
<circle cx="556" cy="409" r="7" fill="#fff" stroke="#000" stroke-width="1.8"/>
<path d="M549 487 H563" stroke="#000" stroke-width="1.8" fill="none"/>
<text x="264" y="350" font-size="13" fill="#000">teaches</text>
<text x="334" y="452" font-size="13" fill="#000">generates</text>
<rect x="243" y="73" width="221" height="75" fill="#000" fill-opacity="0.05"/>
<rect x="236" y="66" width="221" height="75" fill="#e8fdd6" stroke="#000" stroke-width="1.5" rx="0.4"/>
<path d="M236 89 H457 M264 89 V141 M363 89 V141" stroke="#000" stroke-width="1.5" fill="none"/>
<text x="346.5" y="81" font-size="13" font-weight="bold" text-anchor="middle" fill="#000">PROFESSOR</text>
<text x="241" y="106" font-size="13" fill="#000">PK</text>
<text x="269" y="106" font-size="13" fill="#000">PROF_ID</text>
<text x="368" y="106" font-size="13" fill="#000">INTEGER</text>
<text x="269" y="121" font-size="13" fill="#000">PROF_LNAME</text>
<text x="368" y="121" font-size="13" fill="#000">VARCHAR(50)</text>
<text x="269" y="136" font-size="13" fill="#000">PROF_FNAME</text>
<text x="368" y="136" font-size="13" fill="#000">VARCHAR(50)</text>
<rect x="587" y="73" width="233" height="120" fill="#000" fill-opacity="0.05"/>
<rect x="580" y="66" width="233" height="120" fill="#e8fdd6" stroke="#000" stroke-width="1.5" rx="0.4"/>
<path d="M580 89 H813 M608 89 V186 M712 89 V186" stroke="#000" stroke-width="1.5" fill="none"/>
<text x="696.5" y="81" font-size="13" font-weight="bold" text-anchor="middle" fill="#000">STUDENT</text>
<text x="585" y="106" font-size="13" fill="#000">PK</text>
<text x="613" y="106" font-size="13" fill="#000">STUD_ID</text>
<text x="717" y="106" font-size="13" fill="#000">INTEGER</text>
<text x="613" y="121" font-size="13" fill="#000">STUD_FNAME</text>
<text x="717" y="121" font-size="13" fill="#000">VARCHAR(50)</text>
<text x="613" y="136" font-size="13" fill="#000">STUD_LNAME</text>
<text x="717" y="136" font-size="13" fill="#000">VARCHAR(50)</text>
<text x="613" y="151" font-size="13" fill="#000">STUD_STREET</text>
<text x="717" y="151" font-size="13" fill="#000">VARCHAR(255)</text>
<text x="613" y="166" font-size="13" fill="#000">STUD_CITY</text>
<text x="717" y="166" font-size="13" fill="#000">VARCHAR(50)</text>
<text x="613" y="181" font-size="13" fill="#000">STUD_ZIP</text>
<text x="717" y="181" font-size="13" fill="#000">VARCHAR(10)</text>
<rect x="367" y="289" width="228" height="105" fill="#000" fill-opacity="0.05"/>
<rect x="360" y="282" width="228" height="105" fill="#e8fdd6" stroke="#000" stroke-width="1.5" rx="0.4"/>
<path d="M360 305 H588 M388 305 V387 M487 305 V387" stroke="#000" stroke-width="1.5" fill="none"/>
<text x="474.0" y="297" font-size="13" font-weight="bold" text-anchor="middle" fill="#000">CLASS</text>
<text x="365" y="322" font-size="13" fill="#000">PK</text>
<text x="393" y="322" font-size="13" fill="#000">CLASS_ID</text>
<text x="492" y="322" font-size="13" fill="#000">INTEGER</text>
<text x="393" y="337" font-size="13" fill="#000">CLASS_NAME</text>
<text x="492" y="337" font-size="13" fill="#000">VARCHAR(255)</text>
<text x="365" y="352" font-size="13" fill="#000">FK</text>
<text x="393" y="352" font-size="13" fill="#000">PROF_ID</text>
<text x="492" y="352" font-size="13" fill="#000">INTEGER</text>
<text x="365" y="367" font-size="13" fill="#000">FK</text>
<text x="393" y="367" font-size="13" fill="#000">COURSE_ID</text>
<text x="492" y="367" font-size="13" fill="#000">INTEGER</text>
<text x="365" y="382" font-size="13" fill="#000">FK</text>
<text x="393" y="382" font-size="13" fill="#000">ROOM_ID</text>
<text x="492" y="382" font-size="13" fill="#000">INTEGER</text>
<rect x="679" y="289" width="189" height="75" fill="#000" fill-opacity="0.05"/>
<rect x="672" y="282" width="189" height="75" fill="#e8fdd6" stroke="#000" stroke-width="1.5" rx="0.4"/>
<path d="M672 305 H861 M700 305 V357 M774 305 V357" stroke="#000" stroke-width="1.5" fill="none"/>
<text x="766.5" y="297" font-size="13" font-weight="bold" text-anchor="middle" fill="#000">ENROLL</text>
<text x="677" y="322" font-size="13" fill="#000">PK</text>
<text x="705" y="322" font-size="13" fill="#000">STUD_ID</text>
<text x="779" y="322" font-size="13" fill="#000">INTEGER</text>
<text x="677" y="337" font-size="13" fill="#000">PK</text>
<text x="705" y="337" font-size="13" fill="#000">CLASS_ID</text>
<text x="779" y="337" font-size="13" fill="#000">INTEGER</text>
<text x="705" y="352" font-size="13" fill="#000">GRADE</text>
<text x="779" y="352" font-size="13" fill="#000">VARCHAR(3)</text>
<rect x="247" y="501" width="239" height="60" fill="#000" fill-opacity="0.05"/>
<rect x="240" y="494" width="239" height="60" fill="#e8fdd6" stroke="#000" stroke-width="1.5" rx="0.4"/>
<path d="M240 517 H479 M268 517 V554 M378 517 V554" stroke="#000" stroke-width="1.5" fill="none"/>
<text x="359.5" y="509" font-size="13" font-weight="bold" text-anchor="middle" fill="#000">COURSE</text>
<text x="245" y="534" font-size="13" fill="#000">PK</text>
<text x="273" y="534" font-size="13" fill="#000">COURSE_ID</text>
<text x="383" y="534" font-size="13" fill="#000">INTEGER</text>
<text x="273" y="549" font-size="13" fill="#000">COURSE_NAME</text>
<text x="383" y="549" font-size="13" fill="#000">VARCHAR(255)</text>
<rect x="523" y="501" width="206" height="90" fill="#000" fill-opacity="0.05"/>
<rect x="516" y="494" width="206" height="90" fill="#e8fdd6" stroke="#000" stroke-width="1.5" rx="0.4"/>
<path d="M516 517 H722 M544 517 V584 M628 517 V584" stroke="#000" stroke-width="1.5" fill="none"/>
<text x="619.0" y="509" font-size="13" font-weight="bold" text-anchor="middle" fill="#000">ROOM</text>
<text x="521" y="534" font-size="13" fill="#000">PK</text>
<text x="549" y="534" font-size="13" fill="#000">ROOM_ID</text>
<text x="633" y="534" font-size="13" fill="#000">INTEGER</text>
<text x="549" y="549" font-size="13" fill="#000">ROOM_LOC</text>
<text x="633" y="549" font-size="13" fill="#000">VARCHAR(50)</text>
<text x="549" y="564" font-size="13" fill="#000">ROOM_CAP</text>
<text x="633" y="564" font-size="13" fill="#000">VARCHAR(50)</text>
<text x="521" y="579" font-size="13" fill="#000">FK</text>
<text x="549" y="579" font-size="13" fill="#000">CLASS_ID</text>
<text x="633" y="579" font-size="13" fill="#000">INTEGER</text></g></g>
<rect x="791.2" y="583.5" width="98" height="89" fill="none" stroke="#3d8af7" stroke-width="1.5"/>
<path d="M634 136.5 H741 Q744 136.5 744 139.5 V156.5 Q744 159.5 741 159.5 H703 L697.5 165.5 L692 159.5 H634 Q631 159.5 631 156.5 V139.5 Q631 136.5 634 136.5 Z" fill="#5a5b5b"/>
<text x="643.50" y="151.5" font-size="11" fill="#d8d8d8" textLength="89.00" lengthAdjust="spacingAndGlyphs">name : type(length)</text>
<g filter="url(#shadow)"><rect x="580.7" y="169" width="230.9" height="19" rx="3.5" fill="#fff" stroke="#3b89f5" stroke-width="1.6"/></g>
<text x="583.90" y="183.4" font-size="13" fill="#000" textLength="157.10" lengthAdjust="spacingAndGlyphs">STUD_ZIP: VARCHAR(10)</text>
<g filter="url(#shadow)">
<rect x="553.5" y="169.5" width="22.5" height="22.5" rx="4.5" fill="#5a5b5c" stroke="#3a3b3c"/>
<rect x="816.5" y="169.5" width="22.5" height="22.5" rx="4.5" fill="#5a5b5c" stroke="#3a3b3c"/>
<rect x="841.5" y="169.5" width="22.5" height="22.5" rx="4.5" fill="#5a5b5c" stroke="#3a3b3c"/>
<rect x="866.5" y="169.5" width="22.5" height="22.5" rx="4.5" fill="#5a5b5c" stroke="#3a3b3c"/>
<rect x="891.5" y="169.5" width="22.5" height="22.5" rx="4.5" fill="#5a5b5c" stroke="#3a3b3c"/>
</g>
<rect x="562.3" y="177.5" width="4.5" height="8.5" rx="0" fill="none" stroke="#c8d0d4" stroke-width="1"/>
<path d="M827.5 175.9 V185.1 M822.8 180.5 H832.2" stroke="#c9d1d5" fill="none" stroke-width="2.9"/>
<path d="M848.5 176.5 L856.5 184.5 M856.5 176.5 L848.5 184.5" stroke="#c9d1d5" fill="none" stroke-width="3"/>
<path d="M878.6 175.9 L874.3 180.9 H877 V185.7 H880.2 V180.9 H882.9 Z" stroke="none" fill="#c9d1d5" stroke-width="1"/>
<path d="M903.5 185.7 L899.2 180.7 H901.9 V175.9 H905.1 V180.7 H907.8 Z" stroke="none" fill="#c9d1d5" stroke-width="1"/>
</svg></body></html>
